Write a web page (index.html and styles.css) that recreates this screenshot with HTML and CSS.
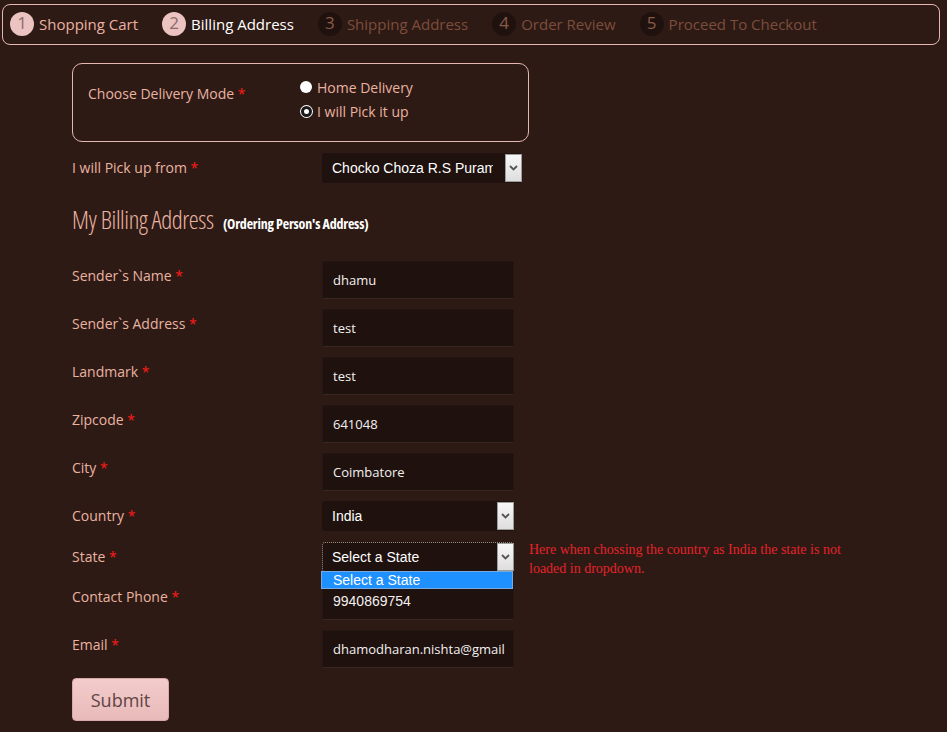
FILE: index.html
```html
<!DOCTYPE html>
<html lang="en">
<head>
<meta charset="utf-8">
<title>Billing Address</title>
<link rel="stylesheet" href="styles.css">
</head>
<body>
<nav class="steps">
  <div class="step done"><span class="num">1</span><span class="txt">Shopping Cart</span></div>
  <div class="step current"><span class="num">2</span><span class="txt">Billing Address</span></div>
  <div class="step todo"><span class="num">3</span><span class="txt">Shipping Address</span></div>
  <div class="step todo"><span class="num">4</span><span class="txt">Order Review</span></div>
  <div class="step todo"><span class="num">5</span><span class="txt">Proceed To Checkout</span></div>
</nav>

<main class="main">
  <section class="delivery">
    <div class="delivery-label">Choose Delivery Mode <span class="req">*</span></div>
    <div class="radios">
      <label class="radio"><span class="dot"></span>Home Delivery</label>
      <label class="radio"><span class="dot checked"></span>I will Pick it up</label>
    </div>
  </section>

  <div class="row pickup">
    <div class="label">I will Pick up from <span class="req">*</span></div>
    <div class="select wide"><span class="val">Chocko Choza R.S Puram</span><span class="arrow"><svg width="9" height="6" viewBox="0 0 9 6"><path d="M1 1l3.5 3.5L8 1" fill="none" stroke="#555" stroke-width="1.8"/></svg></span></div>
  </div>

  <h2 class="title">My Billing Address <small>(Ordering Person's Address)</small></h2>

  <div class="form">
    <div class="row"><div class="label">Sender`s Name <span class="req">*</span></div><div class="input">dhamu</div></div>
    <div class="row"><div class="label">Sender`s Address <span class="req">*</span></div><div class="input">test</div></div>
    <div class="row"><div class="label">Landmark <span class="req">*</span></div><div class="input">test</div></div>
    <div class="row"><div class="label">Zipcode <span class="req">*</span></div><div class="input">641048</div></div>
    <div class="row"><div class="label">City <span class="req">*</span></div><div class="input">Coimbatore</div></div>
    <div class="row"><div class="label">Country <span class="req">*</span></div><div class="select"><span class="val">India</span><span class="arrow"><svg width="9" height="6" viewBox="0 0 9 6"><path d="M1 1l3.5 3.5L8 1" fill="none" stroke="#555" stroke-width="1.8"/></svg></span></div></div>
    <div class="row state">
      <div class="label">State <span class="req">*</span></div>
      <div class="select focus"><span class="val">Select a State</span><span class="arrow"><svg width="9" height="6" viewBox="0 0 9 6"><path d="M1 1l3.5 3.5L8 1" fill="none" stroke="#555" stroke-width="1.8"/></svg></span>
        <div class="dropdown"><div class="opt">Select a State</div></div>
      </div>
      <p class="note">Here when chossing the country as India the state is not loaded in dropdown.</p>
    </div>
    <div class="row"><div class="label">Contact Phone <span class="req">*</span></div><div class="input arial">9940869754</div></div>
    <div class="row"><div class="label">Email <span class="req">*</span></div><div class="input">dhamodharan.nishta@gmail</div></div>
    <button class="submit" type="button">Submit</button>
  </div>
</main>
</body>
</html>
```

FILE: styles.css
```css
html, body {
  margin: 0;
  padding: 0;
  background: #2e1a14;
  font-family: "Open Sans", "DejaVu Sans", sans-serif;
  color: #e9b3a2;
}

.steps {
  box-sizing: border-box;
  margin: 4px 0 0 2px;
  width: 938px;
  height: 41px;
  border: 1px solid #e4b8b0;
  border-radius: 8px;
  display: flex;
  align-items: center;
  padding: 0 0 2px 7px;
  gap: 24px;
}

.step {
  display: flex;
  align-items: center;
  gap: 5px;
  font-size: 15px;
}

.step .num {
  width: 24px;
  height: 24px;
  border-radius: 50%;
  display: flex;
  align-items: center;
  justify-content: center;
  font-size: 17px;
  line-height: 1;
  padding-bottom: 2px;
  box-sizing: border-box;
}

.step.done .num,
.step.current .num {
  background: #ebc3c1;
  color: #8c6b6b;
}

.step.done .txt { color: #eab2a2; }
.step.current .txt { color: #ffffff; }

.step.todo .num {
  background: #1f120e;
  color: #8a5a47;
}
.step.todo .txt { color: #7c4d3c; }

.main {
  padding-left: 72px;
}

.delivery {
  box-sizing: border-box;
  margin-top: 18px;
  width: 457px;
  height: 79px;
  border: 1px solid #e4b8b0;
  border-radius: 10px;
  display: flex;
  padding: 11px 0 0 15px;
  font-size: 14px;
}

.delivery-label {
  width: 212px;
  padding-top: 9px;
  line-height: 20px;
}

.req { color: #ff1a1a; }

.radios {
  display: flex;
  flex-direction: column;
}

.radio {
  display: flex;
  align-items: center;
  gap: 5px;
  height: 24px;
}

.dot {
  width: 12px;
  height: 12px;
  border-radius: 50%;
  background: #fff;
  box-sizing: border-box;
}

.dot.checked {
  border: 3px solid #1a1a1a;
  box-shadow: 0 0 0 1px #fff;
  width: 11px;
  height: 11px;
  margin-left: 1px;
}

.row {
  display: flex;
  align-items: flex-start;
  margin-bottom: 10px;
}

.row.pickup {
  margin-top: 11px;
}

.label {
  width: 250px;
  flex: none;
  font-size: 14px;
  line-height: 20px;
  padding-top: 5px;
}

.input {
  box-sizing: border-box;
  width: 192px;
  height: 38px;
  background: #1e110e;
  border: 1px solid #241611;
  border-bottom-color: #3a2720;
  border-radius: 2px;
  color: #f4f0ee;
  font-size: 13px;
  display: flex;
  align-items: center;
  padding-left: 10px;
  overflow: hidden;
  white-space: nowrap;
}

.input.arial {
  font-family: "Liberation Sans", Arial, sans-serif;
  font-size: 14px;
}

.select {
  position: relative;
  box-sizing: border-box;
  width: 192px;
  height: 30px;
  background: #1e110e;
  border-radius: 3px;
  display: flex;
  align-items: center;
  font-family: "Liberation Sans", Arial, sans-serif;
  font-size: 14px;
  color: #fff;
  padding-left: 10px;
}

.select.wide { width: 200px; }

.select .val {
  flex: 1;
  overflow: hidden;
  white-space: nowrap;
  margin-right: 9px;
}

.select.wide .val { margin-right: 12px; }

.select .arrow {
  box-sizing: border-box;
  flex: none;
  width: 17px;
  height: 28px;
  background: linear-gradient(#f7f7f7, #dedede);
  border: 1px solid #9c9c9c;
  display: flex;
  align-items: center;
  justify-content: center;
}

.select.focus {
  outline: 1px dotted #9a8a84;
  outline-offset: -1px;
}

.row.state { margin-top: 11px; }

.dropdown {
  position: absolute;
  left: -1px;
  top: 29px;
  width: 192px;
  z-index: 2;
}

.dropdown .opt {
  box-sizing: border-box;
  height: 18px;
  background: #1e90ff;
  border: 1px solid #7aa9dd;
  color: #fff;
  line-height: 16px;
  padding-left: 11px;
}

.note {
  margin: -2px 0 -11px 15px;
  width: 340px;
  font-family: "Liberation Serif", "Times New Roman", serif;
  font-size: 14px;
  line-height: 19px;
  color: #e5232b;
}

.title {
  margin: 21px 0 22px;
  font-family: "Open Sans", sans-serif;
  font-weight: 300;
  font-stretch: 75%;
  font-size: 25px;
  line-height: 30px;
  color: #e9b3a2;
  letter-spacing: -0.4px;
}

.title small {
  margin-left: 5px;
  font-size: 14px;
  font-weight: 700;
  color: #fff;
  letter-spacing: -0.2px;
}

.submit {
  display: block;
  box-sizing: border-box;
  width: 97px;
  height: 43px;
  border: 1px solid #d9a8a8;
  border-radius: 4px;
  background: linear-gradient(#f3cccb, #e9baba);
  color: #5e4444;
  font-family: "Open Sans", sans-serif;
  font-size: 18px;
  padding: 0;
  margin-bottom: 12px;
}
```
